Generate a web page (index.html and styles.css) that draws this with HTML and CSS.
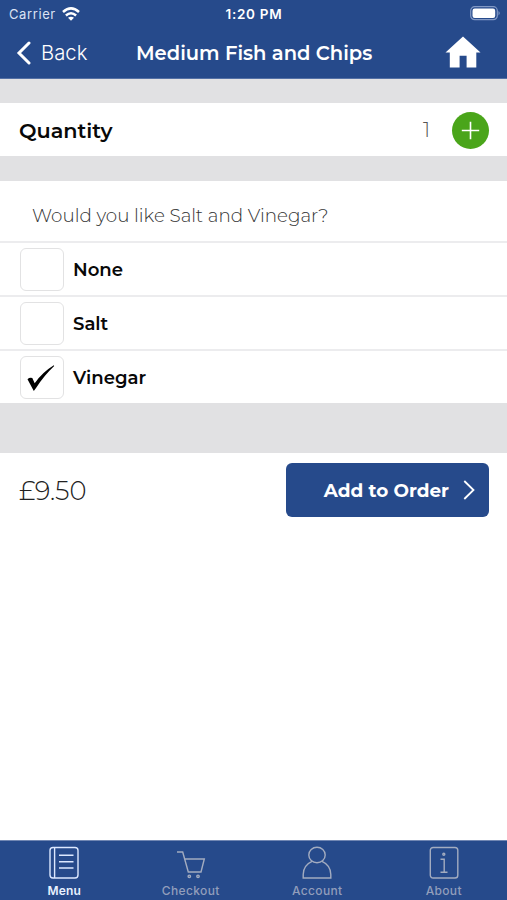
FILE: index.html
```html
<!DOCTYPE html>
<html lang="en">
<head>
<meta charset="utf-8">
<title>Medium Fish and Chips</title>
<link rel="stylesheet" href="styles.css">
</head>
<body>
<header class="header">
  <div class="status">
    <div class="carrier"><span>Carrier</span>
      <svg width="18" height="14" viewBox="0 0 18 14" fill="none" stroke="#fff" stroke-width="2.5"><path d="M1 5Q9-2.2 17 5M3.9 8.5Q9 4 14.1 8.5"/><path d="M6 10.8Q9 8.6 12 10.8L9 13.8Z" fill="#fff" stroke="none"/></svg>
    </div>
    <time class="clock">1:20 PM</time>
    <svg class="battery" width="31" height="15" viewBox="0 0 31 15"><rect x=".7" y=".7" width="26.6" height="13" rx="4" fill="none" stroke="#8299c5" stroke-width="1.2"/><rect x="2.5" y="2.6" width="22.7" height="9.4" rx="2.2" fill="#fff"/><path d="M28.5 5Q31 7.2 28.5 9.4Z" fill="#8299c5"/></svg>
  </div>
  <nav class="navbar">
    <a class="back"><svg width="16" height="24" viewBox="0 0 16 24" fill="none" stroke="#fff" stroke-width="3" stroke-linecap="round"><path d="M13 2L3 12L13 22"/></svg><span>Back</span></a>
    <h1 class="title">Medium Fish and Chips</h1>
    <svg class="home" width="36" height="32" viewBox="0 0 36 32" fill="#fff"><path d="M18 .5L35.5 16.5H31.3V31.5H21.6V19.8H14.6V31.5H4.8V16.5H.5Z"/></svg>
  </nav>
</header>
<main>
  <section class="quantity">
    <h2>Quantity</h2>
    <span class="number">1</span>
    <button class="plus" aria-label="Add one"><svg width="37" height="37" viewBox="0 0 37 37" fill="none" stroke="#fff" stroke-width="1.6"><path d="M18.5 9.8V27.2M9.8 18.5H27.2"/></svg></button>
  </section>
  <section class="options">
    <p class="question">Would you like Salt and Vinegar?</p>
    <div class="option"><span class="box"></span><span class="label">None</span></div>
    <div class="option"><span class="box"></span><span class="label">Salt</span></div>
    <div class="option"><span class="box"><svg width="28" height="26" viewBox="0 0 28 26"><path d="M.5 14.2Q2.5 12.2 5.3 13L7.7 18.2Q15.5 7.2 26.8.3L27.2 1Q16.8 10.8 9.2 22.8L6.8 26Z"/></svg></span><span class="label">Vinegar</span></div>
  </section>
  <section class="summary">
    <span class="price">£9.50</span>
    <button class="add"><span>Add to Order</span><svg width="12" height="20" viewBox="0 0 12 20" fill="none" stroke="#fff" stroke-width="1.8"><path d="M1.3 1L10.5 10L1.3 19"/></svg></button>
  </section>
</main>
<footer class="tabs">
  <a class="tab active"><svg width="32" height="34" viewBox="0 0 32 34"><rect x="2" y="1.5" width="28" height="30.5" rx="3"/><path d="M6.6 1.5V32M11 9.3H25.5M11 15.7H25.5M11 22H25.5"/></svg><span>Menu</span></a>
  <a class="tab"><svg width="32" height="34" viewBox="0 0 32 34"><path d="M2 6H7.7L13.3 26H26L29.3 13H9.7"/><circle cx="14.3" cy="30.3" r="1.2"/><circle cx="23" cy="30.3" r="1.2"/></svg><span>Checkout</span></a>
  <a class="tab"><svg width="32" height="34" viewBox="0 0 32 34"><ellipse cx="16" cy="9" rx="8.2" ry="7.7"/><path d="M11 15.3C5 18 2.2 22 2.2 28.5V32H29.8V28.5C29.8 22 27 18 21 15.3"/></svg><span>Account</span></a>
  <a class="tab"><svg width="32" height="34" viewBox="0 0 32 34"><rect x="2.3" y="1.5" width="27.5" height="30.5" rx="2.8"/><path d="M12.5 13.2H16.2V26.3M12.5 26.3H19.5"/><circle cx="15.8" cy="8.3" r="1"/></svg><span>About</span></a>
</footer>
</body>
</html>
```
FILE: styles.css
```css
* { box-sizing: border-box; }
body { margin: 0; height: 900px; display: flex; flex-direction: column; background: #fff; color: #080808; font-family: Montserrat, Inter, "Liberation Sans", sans-serif; overflow: hidden; }
h1, h2, p { margin: 0; }
button { border: 0; padding: 0; font-family: inherit; }
svg { display: block; flex: none; }
span, h1, h2, time { white-space: nowrap; }
.header { height: 79px; background: #264a8b; color: #fff; border-bottom: 1px solid #5470a5; }
.status { height: 27px; padding: 0 6px 0 9px; display: grid; grid-template-columns: 1fr auto 1fr; align-items: center; font-family: Inter, sans-serif; font-size: 13px; }
.carrier { display: flex; align-items: center; gap: 6px; color: #dbe3f4; letter-spacing: .6px; }
.clock { font-size: 13.5px; font-weight: 600; letter-spacing: .7px; margin-right: 2px; }
.battery { justify-self: end; }
.navbar { height: 51px; padding: 0 26px 0 16px; display: grid; grid-template-columns: 120px 1fr 36px; align-items: center; }
.back { display: flex; align-items: center; gap: 9px; font: 300 20.3px Inter, sans-serif; }
.back span { margin-top: -1px; }
.home { margin-top: -1px; }
.title { font-size: 19.5px; font-weight: 600; }
.quantity { height: 77px; border-top: 24px solid #e1e1e3; padding: 1px 18px 0 19px; display: flex; align-items: center; }
.quantity h2 { font-size: 20.8px; font-weight: 600; flex: 1; }
.number { font-size: 20px; font-weight: 300; color: #555; margin-right: 22px; }
.plus { width: 37px; height: 37px; border-radius: 50%; background: #4aa51a; }
.options { border-top: 25px solid #e1e1e3; border-bottom: 50px solid #e1e1e3; }
.question { height: 60px; padding: 9px 0 0 32px; display: flex; align-items: center; font-size: 18.3px; font-weight: 300; color: #333; }
.option { height: 54px; border-top: 2px solid #ececee; padding: 1px 0 0 20px; display: flex; align-items: center; gap: 9px; }
.box { width: 44px; height: 43px; border: 1.5px solid #e2e2e3; border-radius: 6px; display: flex; align-items: center; justify-content: center; padding-right: 2px; }
.label { font-size: 18.1px; font-weight: 600; }
.summary { height: 74px; padding: 0 18px 0 19px; display: flex; align-items: center; justify-content: space-between; }
.price { font-size: 25.8px; font-weight: 300; color: #222; }
.add { width: 203px; height: 54px; border-radius: 6px; background: #264a8b; color: #fff; display: flex; align-items: center; justify-content: flex-end; gap: 14px; padding-right: 14px; font-size: 18.4px; font-weight: 700; }
.tabs { height: 60px; margin-top: auto; padding-left: 1px; background: #264a8b; border-top: 1px solid #7187b3; display: grid; grid-template-columns: repeat(4, 1fr); }
.tab { display: flex; flex-direction: column; align-items: center; padding-top: 5px; gap: 3px; color: #929ebb; font: 500 12px/16px Inter, sans-serif; letter-spacing: .35px; }
.tab svg { fill: none; stroke: #a3acc0; stroke-width: 1.4; }
.active { color: #e8f1ff; font-weight: 600; letter-spacing: .1px; }
.active svg { stroke: #dce8ff; }
```
